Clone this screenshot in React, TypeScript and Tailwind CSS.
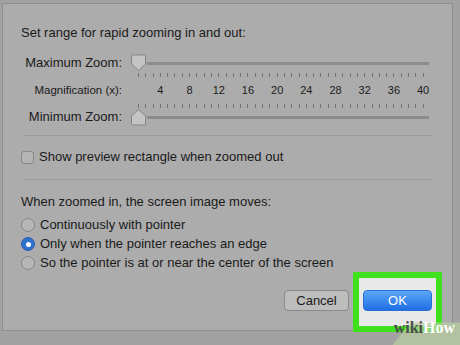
const ticks = Array.from({ length: 40 }, (_, i) => i + 1);

function Thumb({ up }: { up?: boolean }) {
  return (
    <svg width="17" height="18" viewBox="0 0 17 18" className="shrink-0">
      {up ? (
        <path d="M1.5 16.5 V8 L8.5 1.5 L15.5 8 V16.5 Q15.5 17 15 17 H2 Q1.5 17 1.5 16.5 Z" fill="#c4c4c4" stroke="#858585" />
      ) : (
        <path d="M1.5 1.5 Q1.5 1 2 1 H15 Q15.5 1 15.5 1.5 V10 L8.5 16.5 L1.5 10 Z" fill="#c4c4c4" stroke="#858585" />
      )}
    </svg>
  );
}

function Track({ up }: { up?: boolean }) {
  return (
    <div className="flex h-[18px] items-center">
      <Thumb up={up} />
      <div className="h-[3px] w-[282px] bg-[#8c8c8c]" />
    </div>
  );
}

function Ticks() {
  return (
    <div className="ml-[8px] flex h-[4px] w-[286px] justify-between">
      {ticks.map((t) => (
        <div key={t} className="h-[4px] w-px bg-[#737373]" />
      ))}
    </div>
  );
}

function Radio({ on, label }: { on?: boolean; label: string }) {
  return (
    <div className="flex h-4 items-center gap-[5px]">
      {on ? (
        <div className="flex h-[14px] w-[14px] items-center justify-center rounded-full border border-[#2a5fa8] bg-[#2f72cf]">
          <div className="h-[5px] w-[5px] rounded-full bg-white" />
        </div>
      ) : (
        <div className="h-[14px] w-[14px] rounded-full border border-[#888] bg-[#b6b6b6]" />
      )}
      <span>{label}</span>
    </div>
  );
}

export default function App() {
  return (
    <div className="relative h-[345px] w-[460px] overflow-hidden bg-[#a2a2a2] pl-[2px] pt-[3px] font-['Liberation_Sans',Arial,sans-serif] text-[13px] leading-4 text-[#1a1a1a]">
      <div className="flex h-[328px] w-[451px] flex-col border border-[#8e8e8e] bg-[#acacac] pl-[18px] pr-[20px] pt-[21px]">
        <p>Set range for rapid zooming in and out:</p>

        <div className="mt-[13px] grid grid-cols-[101px_301px] gap-x-[8px]">
          <span className="flex h-[18px] items-center justify-end">Maximum Zoom:</span>
          <Track />
          <span />
          <div className="mt-px">
            <Ticks />
          </div>
          <span className="mt-[6px] flex h-[14px] items-center justify-end text-[11.5px]">Magnification (x):</span>
          <div className="ml-[8px] mt-[6px] flex h-[14px] w-[286px] justify-between text-[11px]">
            {ticks.map((t) => (
              <div key={t} className="relative w-px">
                {t % 4 === 0 && (
                  <span className="absolute left-1/2 top-0 -translate-x-1/2 leading-[14px]">{t}</span>
                )}
              </div>
            ))}
          </div>
          <span />
          <div className="mt-[7px]">
            <Ticks />
          </div>
          <span className="flex h-[18px] items-center justify-end">Minimum Zoom:</span>
          <Track up />
        </div>

        <div className="ml-[4px] mt-[9px] h-px w-[407px] bg-[#999]" />

        <div className="mt-[13px] flex h-4 items-center gap-[5px]">
          <div className="h-[13px] w-[13px] rounded-[3px] border border-[#888] bg-[#b4b4b4]" />
          <span>Show preview rectangle when zoomed out</span>
        </div>

        <div className="ml-[4px] mt-[14px] h-px w-[407px] bg-[#999]" />

        <p className="mt-[14px]">When zoomed in, the screen image moves:</p>
        <div className="mt-[7px] flex flex-col gap-[3px]">
          <Radio label="Continuously with pointer" />
          <Radio on label="Only when the pointer reaches an edge" />
          <Radio label="So the pointer is at or near the center of the screen" />
        </div>

        <div className="mt-[19px] flex justify-end gap-[14px]">
          <button className="h-[21px] w-[65px] rounded-[4px] border border-[#8a8a8a] bg-[#bdbdbd] text-[13px] text-[#1a1a1a]">
            Cancel
          </button>
          <div className="relative h-[21px] w-[69px]">
            <div className="absolute -bottom-[21px] -left-[10px] -right-[10px] -top-[18px] border-[6px] border-[#3fe01c] bg-[#e9e9e9]" />
            <button className="relative h-[21px] w-[69px] rounded-[4px] border border-[#2a6fd6] bg-gradient-to-b from-[#5aa6f6] to-[#1f6ee4] text-[13px] text-white">
              OK
            </button>
          </div>
        </div>
      </div>

      <div className="absolute bottom-0 right-0 h-[25px] w-[90px] bg-[#b9cfa0]/70 [clip-path:polygon(25%_100%,45%_10%,100%_10%,100%_100%)]" />
      <div className="absolute bottom-[9px] right-[5px] font-['Liberation_Serif',serif] text-[16px] font-bold leading-4">
        <span className="text-[#4d4d4d]">wiki</span>
        <span className="text-white">How</span>
      </div>
    </div>
  );
}
